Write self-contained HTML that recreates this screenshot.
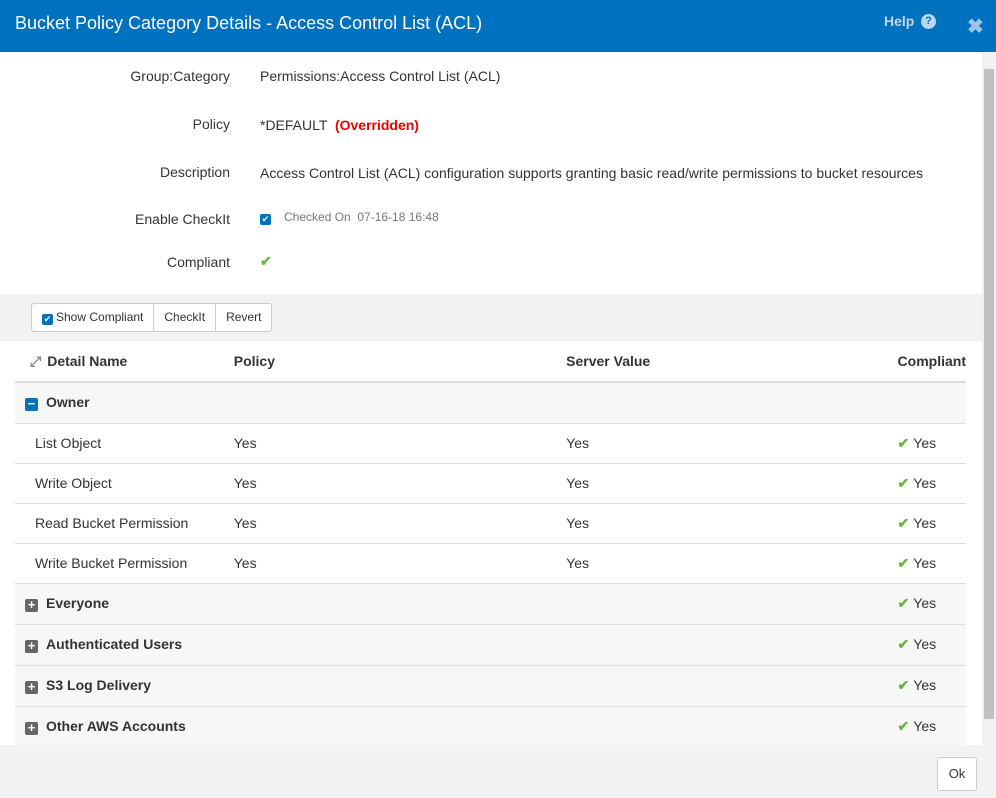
<!DOCTYPE html>
<html><head><style>
*{margin:0;padding:0;box-sizing:border-box}
body{width:996px;height:798px;overflow:hidden;font-family:"Liberation Sans",sans-serif;font-size:14px;color:#333;background:#fff;position:relative}
.hdr{position:absolute;left:0;top:0;width:996px;height:52px;background:#0071bf;color:#fff}
.hdr .t{position:absolute;left:15px;top:13px;font-size:18px}
.hdr .h{position:absolute;left:884px;top:13px;font-size:14px;font-weight:bold;color:#bcd8f0}
.hdr .q{position:absolute;left:921px;top:14px;width:15px;height:15px;border-radius:50%;background:#bcd8f0;color:#0071bf;font-size:11px;font-weight:bold;text-align:center;line-height:15px}
.hdr .x{position:absolute;left:967px;top:14px;font-size:20px;color:#9cc4e6;font-weight:bold}
.sb{position:absolute;left:982px;top:52px;width:14px;height:693px;background:#f1f1f1}
.sb .th{position:absolute;left:2px;top:17px;width:10px;height:650px;background:#c1c1c1}
.lbl{position:absolute;width:230px;text-align:right;left:0}
.val{position:absolute;left:260px}
.tool{position:absolute;left:0;top:294px;width:982px;height:47px;background:#f2f2f2}
.btns{position:absolute;left:31px;top:303px;height:29px;border:1px solid #ccc;border-radius:3px;background:#fff;display:flex;font-size:12px}
.btns div{padding:0 10px;line-height:27px;border-right:1px solid #ccc}
.btns div:last-child{border:none}
.cb{display:inline-block;width:11px;height:11px;background:#0071bf;border-radius:2px;color:#fff;font-size:9px;line-height:11px;text-align:center;vertical-align:-1px;margin-right:3px}
table{position:absolute;left:15px;top:341px;width:951px;border-collapse:collapse}
td,th{text-align:left;padding:0 0 0 20px;border-bottom:1px solid #ddd;height:40px}
th{height:41px;border-bottom:2px solid #ddd}
tr.g td{background:#f7f7f7;font-weight:bold;height:41px}
.ck{color:#6cb33e;font-weight:bold;margin-right:4px}
.sq{display:inline-block;width:13px;height:13px;border-radius:2px;background:#666;color:#fff;text-align:center;line-height:12px;font-size:13px;font-weight:bold;vertical-align:-1px;margin-right:8px;margin-left:-10px}
.foot{position:absolute;left:0;top:745px;width:996px;height:53px;background:#f2f2f2}
.ok{position:absolute;left:937px;top:757px;width:40px;height:34px;border:1px solid #ccc;border-radius:3px;background:#fff;text-align:center;line-height:32px;font-size:13px}
</style></head><body>
<div class="hdr"><div class="t">Bucket Policy Category Details - Access Control List (ACL)</div><div class="h">Help</div><div class="q">?</div><div class="x">✖</div></div>
<div class="lbl" style="top:68px">Group:Category</div><div class="val" style="top:68px">Permissions:Access Control List (ACL)</div>
<div class="lbl" style="top:116px">Policy</div><div class="val" style="top:117px">*DEFAULT &nbsp;<b style="color:#e00">(Overridden)</b></div>
<div class="lbl" style="top:164px">Description</div><div class="val" style="top:165px">Access Control List (ACL) configuration supports granting basic read/write permissions to bucket resources</div>
<div class="lbl" style="top:211px">Enable CheckIt</div><div class="val" style="top:210px;font-size:12px;color:#777"><span class="cb">✔</span> &nbsp; Checked On &nbsp;07-16-18 16:48</div>
<div class="lbl" style="top:254px">Compliant</div><div class="val" style="top:253px"><span class="ck">✔</span></div>
<div class="tool"></div>
<div class="btns"><div style="padding-left:10px"><span class="cb">✔</span>Show Compliant</div><div>CheckIt</div><div>Revert</div></div>
<table>
<tr><th style="width:199px"><span style="color:#888;margin-left:-5px;margin-right:6px">⤢</span>Detail Name</th><th style="width:333px">Policy</th><th style="width:332px">Server Value</th><th>Compliant</th></tr>
<tr class="g"><td colspan="4"><span class="sq" style="background:#0071bf">−</span>Owner</td></tr>
<tr><td>List Object</td><td>Yes</td><td>Yes</td><td><span class="ck">✔</span>Yes</td></tr>
<tr><td>Write Object</td><td>Yes</td><td>Yes</td><td><span class="ck">✔</span>Yes</td></tr>
<tr><td>Read Bucket Permission</td><td>Yes</td><td>Yes</td><td><span class="ck">✔</span>Yes</td></tr>
<tr><td>Write Bucket Permission</td><td>Yes</td><td>Yes</td><td><span class="ck">✔</span>Yes</td></tr>
<tr class="g"><td colspan="3"><span class="sq">+</span>Everyone</td><td style="font-weight:normal"><span class="ck">✔</span>Yes</td></tr>
<tr class="g"><td colspan="3"><span class="sq">+</span>Authenticated Users</td><td style="font-weight:normal"><span class="ck">✔</span>Yes</td></tr>
<tr class="g"><td colspan="3"><span class="sq">+</span>S3 Log Delivery</td><td style="font-weight:normal"><span class="ck">✔</span>Yes</td></tr>
<tr class="g"><td colspan="3"><span class="sq">+</span>Other AWS Accounts</td><td style="font-weight:normal"><span class="ck">✔</span>Yes</td></tr>
</table>
<div class="sb"><div class="th"></div></div>
<div class="foot"></div><div class="ok">Ok</div>
</body></html>
